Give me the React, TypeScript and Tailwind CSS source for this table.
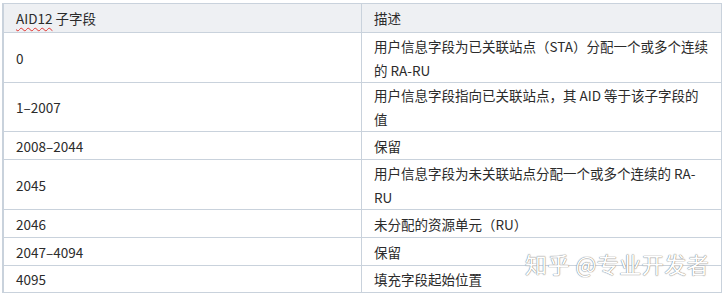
const rows: { code: string; desc: string[]; h: string }[] = [
  { code: "0", desc: ["用户信息字段为已关联站点（STA）分配一个或多个连续", "的 RA-RU"], h: "h-[50px]" },
  { code: "1–2007", desc: ["用户信息字段指向已关联站点，其 AID 等于该子字段的", "值"], h: "h-[49px]" },
  { code: "2008–2044", desc: ["保留"], h: "h-[28px]" },
  { code: "2045", desc: ["用户信息字段为未关联站点分配一个或多个连续的 RA-", "RU"], h: "h-[50px]" },
  { code: "2046", desc: ["未分配的资源单元（RU）"], h: "h-[28px]" },
  { code: "2047–4094", desc: ["保留"], h: "h-[28px]" },
  { code: "4095", desc: ["填充字段起始位置"], h: "h-[27px]" },
];

export default function App() {
  return (
    <div className="relative w-[724px] h-[295px] overflow-hidden bg-white pt-[3px] pl-[2px] font-['Noto_Sans_CJK_SC','Noto_Sans',sans-serif] text-[13.5px] leading-[24px] text-[#2b2b2b]">
      <div className="w-[720px] border-l-2 border-t border-r border-[#c9d2dc]">
        {/* header */}
        <div className="flex h-[29px] bg-[#eef0f3] border-b border-[#c9d2dc]">
          <div className="w-[358px] border-r border-[#c9d2dc] px-3 flex items-center">
            <span className="underline decoration-wavy decoration-[#e0332f] decoration-1 underline-offset-[3px]">AID12</span>
            <span>&nbsp;子字段</span>
          </div>
          <div className="flex-1 px-3 flex items-center">描述</div>
        </div>

        {rows.map((r) => (
          <div key={r.code} className={`flex box-border border-b border-[#c9d2dc] ${r.h}`}>
            <div className="w-[358px] border-r border-[#c9d2dc] px-3 flex items-center">{r.code}</div>
            <div className="flex-1 px-3 flex flex-col justify-center whitespace-nowrap">
              {r.desc.map((line, i) => (
                <div key={i}>{line}</div>
              ))}
            </div>
          </div>
        ))}
      </div>

      {/* watermark */}
      <div className="absolute left-[525px] top-[249px] text-[22px] leading-[28px] text-white tracking-[0.5px] [text-shadow:0_0_1px_#7a7a7a,0_0_1px_#7a7a7a] whitespace-nowrap">
        知乎 @专业开发者
      </div>
    </div>
  );
}
